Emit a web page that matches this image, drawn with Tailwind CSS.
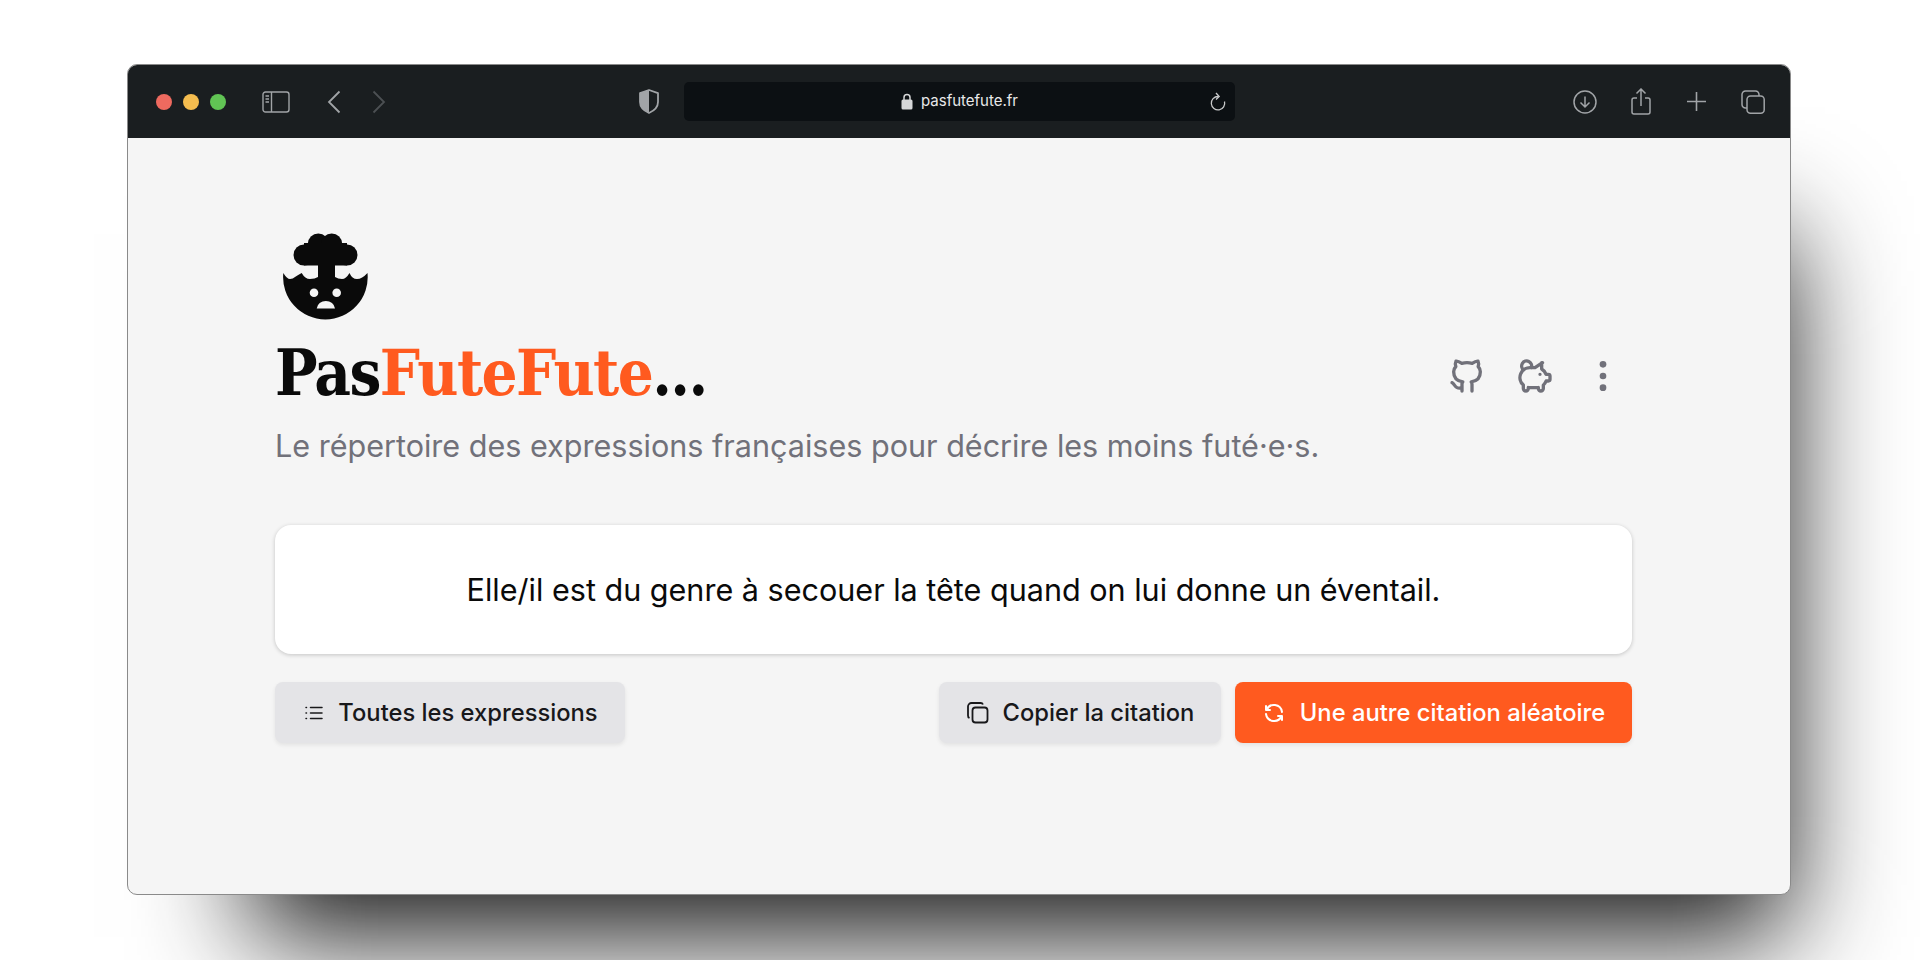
<!DOCTYPE html>
<html lang="fr">
<head>
    <meta charset="UTF-8">
    <script src="https://cdn.jsdelivr.net/npm/@tailwindcss/browser@4"></script>
    <title>PasFuteFute</title>
</head>
<body class="bg-white h-[960px] overflow-hidden pl-[127px] pt-[64px] font-['Inter',sans-serif]">

    <!-- Browser window -->
    <div class="w-[1664px] h-[831px] rounded-[10px] overflow-hidden border border-[#8a8a8a] bg-[#f5f5f5] shadow-[60px_106px_105px_-64px_rgba(0,0,0,0.9)]" id="window">

        <!-- Title bar -->
        <div class="h-[73px] bg-[#1a1e20] flex items-center text-[#a1a4a7]">
            <div class="flex gap-[11px] ml-[28px]">
                <div class="w-[16px] h-[16px] rounded-full bg-[#ee6a5f]"></div>
                <div class="w-[16px] h-[16px] rounded-full bg-[#f5bd4f]"></div>
                <div class="w-[16px] h-[16px] rounded-full bg-[#61c454]"></div>
            </div>
            <svg class="ml-[36px]" width="28" height="22" viewBox="0 0 28 22" fill="none" stroke="currentColor" stroke-width="1.4"><rect x="1" y="1" width="26" height="20" rx="2.5"/><path d="M9.5 1v20M3.5 5h3.5M3.5 8h3.5M3.5 11h3.5"/></svg>
            <svg class="ml-[37px]" width="14" height="24" viewBox="0 0 14 24" fill="none" stroke="currentColor" stroke-width="1.8"><path d="M12.5 1.5 2 12l10.500 10.500"/></svg>
            <svg class="ml-[31px]" width="14" height="24" viewBox="0 0 14 24" fill="none" stroke="#4c5053" stroke-width="1.8"><path d="M1.500 1.500 12 12 1.500 22.500"/></svg>
            <svg class="ml-[252px]" width="22" height="25" viewBox="0 0 22 25" fill="none"><path d="M11 1 2 4.200V13c0 5.500 4.500 9 9 11z" fill="#a1a4a7"/><path d="M11 1l9 3.200V13c0 5.500-4.500 9-9 11-4.500-2-9-5.500-9-11V4.200z" stroke="#a1a4a7" stroke-width="1.800" stroke-linejoin="round"/></svg>
            <div class="ml-[24px] w-[551px] h-[39px] rounded-[5px] bg-[#0c1013] flex items-center justify-center relative">
                <svg width="12" height="17" viewBox="0 0 12 17" class="mr-[8px]"><path d="M3 7V4.500a3 3 0 0 1 6 0V7" fill="none" stroke="#d6d7d8" stroke-width="1.500"/><rect x="0.500" y="6.500" width="11" height="10" rx="1.500" fill="#d6d7d8"/></svg>
                <span class="text-[15px] text-[#e8e8e9]">pasfutefute.fr</span>
                <svg class="absolute right-[9px] top-[10px]" width="16" height="20" viewBox="0 0 16 20" fill="none" stroke="#c9cacb" stroke-width="1.300"><path d="M8 4.500a6.700 6.700 0 1 0 6.500 5"/><path d="M6 1l3.200 3.500L6 7.500"/></svg>
            </div>
            <svg class="ml-[338px]" width="24" height="24" viewBox="0 0 24 24" fill="none" stroke="currentColor" stroke-width="1.500"><circle cx="12" cy="12" r="11"/><path d="M12 6.500v10.500M7.500 12.500 12 17l4.500-4.500"/></svg>
            <svg class="ml-[34px]" width="20" height="27" viewBox="0 0 20 27" fill="none" stroke="currentColor" stroke-width="1.500"><path d="M6 10H3a2 2 0 0 0-2 2v12a2 2 0 0 0 2 2h14a2 2 0 0 0 2-2V12a2 2 0 0 0-2-2h-3"/><path d="M10 18V1.500M5.500 5.500 10 1l4.500 4.500"/></svg>
            <svg class="ml-[36px]" width="19" height="19" viewBox="0 0 19 19" fill="none" stroke="currentColor" stroke-width="1.600"><path d="M9.500 0v19M0 9.500h19"/></svg>
            <svg class="ml-[35px]" width="24" height="24" viewBox="0 0 24 24" fill="none" stroke="currentColor" stroke-width="1.500"><rect x="6" y="6" width="17.200" height="17.200" rx="3.500"/><path d="M6 18H4.500A3.500 3.500 0 0 1 1 14.500v-10A3.500 3.500 0 0 1 4.500 1h10A3.500 3.500 0 0 1 18 4.500V6"/></svg>
        </div>

        <!-- Page -->
        <div class="pl-[147px] pr-[158px] pt-[95px]">
            <svg class="ml-[7px] block" width="86" height="88" viewBox="0 0 86 88" fill="#0a0a0a">
                <circle cx="36.300" cy="11" r="10.500"/><circle cx="49.700" cy="11" r="10.500"/><circle cx="22" cy="22" r="10.500"/><circle cx="65" cy="22" r="10.500"/>
                <rect x="22" y="10" width="43" height="22.500"/><rect x="36" y="30" width="17" height="18"/>
                <path d="M1.300 40Q5 46 8 46 11 46 13 44 16 42 19.700 40 23 46 28 46 33 46 36 44L53 44Q56 46 60 46 64 46 67.500 40 70 46 75 46 80 46 85.500 40A42.300 42.300 0 1 1 1.300 40Z"/>
                <circle cx="32" cy="59.700" r="4.300" fill="#f5f5f5"/><circle cx="54.700" cy="59.700" r="4.300" fill="#f5f5f5"/>
                <path d="M34.700 75.500A9.200 8.500 0 0 1 53 75.500Z" fill="#f5f5f5"/>
            </svg>
            <div class="flex items-center justify-between mt-[14px]">
                <h1 class="font-['DejaVu_Serif_Condensed','DejaVu_Serif',serif] font-bold text-[63px] leading-[76px] tracking-[-1.6px] text-[#0a0a0a]">Pas<span class="text-[#ff5a1f]">FuteFute</span>...</h1>
                <div class="flex items-center text-[#71717a] mr-[9px] gap-[28px] mt-[6px]">
                    <svg width="40" height="40" viewBox="0 0 24 24" fill="none" stroke="currentColor" stroke-width="2" stroke-linecap="round" stroke-linejoin="round"><path d="M9 19c-4.300 1.400-4.300-2.500-6-3m12 5v-3.500c0-1 .1-1.400-.5-2c2.800-.3 5.500-1.400 5.500-6a4.600 4.600 0 0 0-1.300-3.200a4.200 4.200 0 0 0-.1-3.200s-1.100-.3-3.500 1.300a12.300 12.300 0 0 0-6.200 0c-2.400-1.600-3.500-1.300-3.500-1.300a4.200 4.200 0 0 0-.1 3.200a4.600 4.600 0 0 0-1.300 3.200c0 4.600 2.700 5.700 5.500 6c-.6 .6-.6 1.200-.5 2v3.500"/></svg>
                    <svg width="40" height="40" viewBox="0 0 24 24" fill="none" stroke="currentColor" stroke-width="2" stroke-linecap="round" stroke-linejoin="round"><path d="M15 11v.01M5.173 8.378a3 3 0 1 1 4.656-1.377M16 4v3.803A6.019 6.019 0 0 1 18.658 11h1.341a1 1 0 0 1 1 1v2a1 1 0 0 1-1 1h-1.342c-.336 .95-.907 1.800-1.658 2.473v2.027a1.500 1.500 0 0 1-3 0v-.583a6.040 6.040 0 0 1-1 .083h-4a6.040 6.040 0 0 1-1-.083v.583a1.500 1.500 0 0 1-3 0v-2.027a6 6 0 0 1 4.500-10.473h2.500l4.500-3z"/></svg>
                    <svg width="40" height="40" viewBox="0 0 24 24" fill="currentColor"><circle cx="12" cy="5" r="2"/><circle cx="12" cy="12" r="2"/><circle cx="12" cy="19" r="2"/></svg>
                </div>
            </div>
            <p class="text-[30.55px] leading-[36px] text-[#71717a] mt-[17px]">Le répertoire des expressions françaises pour décrire les moins futé·e·s.</p>

            <!-- Citation -->
            <div class="mt-[61px] h-[129px] rounded-[16px] bg-white shadow-[0_1px_4px_rgba(0,0,0,0.2)] flex items-center justify-center">
                <p class="text-[30.55px] text-[#0a0a0a]">Elle/il est du genre à secouer la tête quand on lui donne un éventail.</p>
            </div>

            <!-- Actions -->
            <div class="flex items-center mt-[28px] text-[23.75px] font-medium text-[#18181b]">
                <button class="h-[61px] w-[350px] rounded-[8px] bg-[#e4e4e7] shadow-[0_2px_4px_rgba(0,0,0,0.08)] flex items-center justify-center gap-[12px]">
                    <svg width="24" height="24" viewBox="0 0 24 24" fill="none" stroke="currentColor" stroke-width="1.500" stroke-linecap="round"><path d="M8.500 6.500h11.500M8.500 12h11.500M8.500 17.500h11.500M4 6.500h.5M4 12h.5M4 17.500h.5"/></svg>
                    Toutes les expressions
                </button>
                <button class="ml-auto h-[61px] w-[282px] rounded-[8px] bg-[#e4e4e7] shadow-[0_2px_4px_rgba(0,0,0,0.08)] flex items-center justify-center gap-[13px]">
                    <svg width="24" height="24" viewBox="0 0 24 24" fill="none" stroke="currentColor" stroke-width="1.800"><rect x="6.500" y="6.500" width="15" height="15" rx="3"/><path d="M17 3.500A2.500 2.500 0 0 0 14.500 2h-9A3.500 3.500 0 0 0 2 5.500v9A2.500 2.500 0 0 0 3.500 17"/></svg>
                    Copier la citation
                </button>
                <button class="ml-[14px] h-[61px] w-[397px] rounded-[8px] bg-[#ff5a1f] text-white shadow-[0_2px_4px_rgba(0,0,0,0.08)] flex items-center justify-center gap-[14px]">
                    <svg width="24" height="24" viewBox="0 0 24 24" fill="none" stroke="currentColor" stroke-width="2" stroke-linecap="round" stroke-linejoin="round"><path d="M20 11a8.100 8.100 0 0 0-15.500-2m-.5-4v4h4M4 13a8.100 8.100 0 0 0 15.500 2m.5 4v-4h-4"/></svg>
                    Une autre citation aléatoire
                </button>
            </div>
        </div>
    </div>
</body>
</html>
